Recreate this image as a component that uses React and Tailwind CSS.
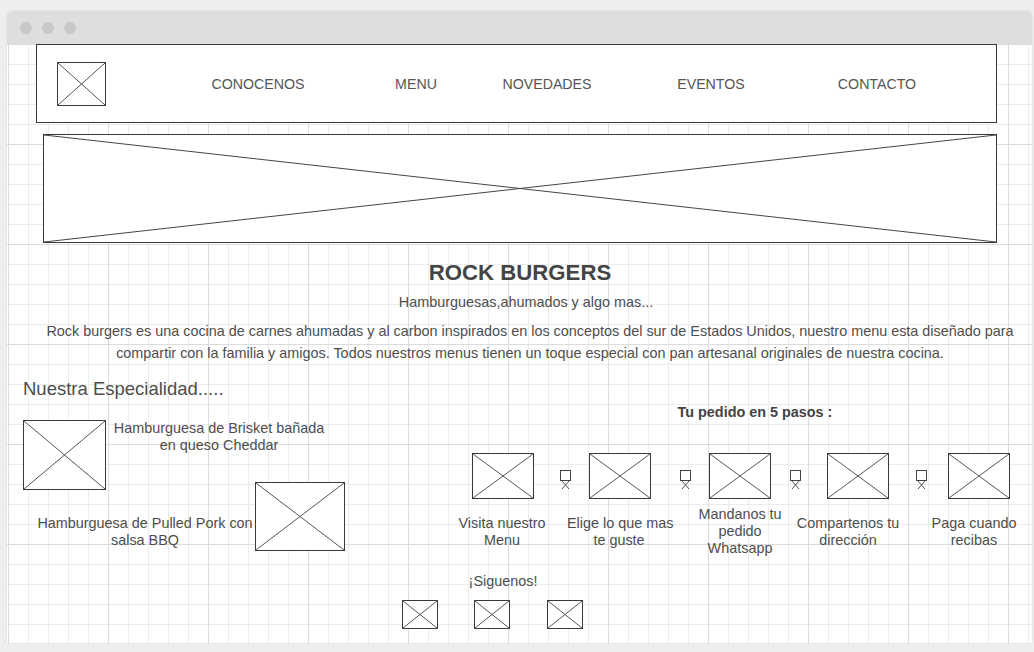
// Wireframe mockup: Rock Burgers landing page
function Ph({ className = "", line = "#555555" }) {
  return (
    <div className={`relative shrink-0 border border-[#3a3a3a] bg-white ${className}`}>
      <svg className="absolute inset-0 h-full w-full" viewBox="0 0 100 100" preserveAspectRatio="none">
        <line x1="0" y1="0" x2="100" y2="100" stroke={line} strokeWidth="1" vectorEffect="non-scaling-stroke" />
        <line x1="100" y1="0" x2="0" y2="100" stroke={line} strokeWidth="1" vectorEffect="non-scaling-stroke" />
      </svg>
    </div>
  );
}

function Connector({ className = "" }) {
  return (
    <svg className={`mt-[17px] shrink-0 ${className}`} width="11" height="20" viewBox="0 0 11 20">
      <rect x="0.5" y="0.5" width="10" height="10" fill="white" stroke="#444" strokeWidth="1" />
      <line x1="2" y1="11" x2="9" y2="19" stroke="#555" strokeWidth="1" />
      <line x1="9" y1="11" x2="2" y2="19" stroke="#555" strokeWidth="1" />
    </svg>
  );
}

const nav = [
  { label: "CONOCENOS", ml: "ml-[92px]" },
  { label: "MENU", ml: "ml-[38px]" },
  { label: "NOVEDADES", ml: "ml-[11px]" },
  { label: "EVENTOS", ml: "ml-[44px]" },
  { label: "CONTACTO", ml: "ml-[46px]" },
];

export default function App() {
  return (
    <div className="h-[652px] w-[1034px] overflow-hidden bg-[#eeeeee] pl-[7px] pt-[11px] font-['Liberation_Sans',Arial,sans-serif] text-[14.4px] text-[#4d4d4d]">
      <div className="w-[1025px] overflow-hidden rounded-t-[6px] shadow-[0_0_2px_rgba(0,0,0,0.12)]">
        {/* title bar */}
        <div className="flex h-[33px] items-center gap-[10px] bg-[#dedede] pl-[13px]">
          <span className="h-[12px] w-[12px] rounded-full bg-[#c8c8c8]" />
          <span className="h-[12px] w-[12px] rounded-full bg-[#c8c8c8]" />
          <span className="h-[12px] w-[12px] rounded-full bg-[#c8c8c8]" />
        </div>

        {/* canvas */}
        <div className="h-[599px] bg-white bg-[linear-gradient(to_right,#dcdcdc_1px,transparent_1px),linear-gradient(to_bottom,#dcdcdc_1px,transparent_1px),linear-gradient(to_right,#ececec_1px,transparent_1px),linear-gradient(to_bottom,#ececec_1px,transparent_1px)] bg-size-[100px_100px,100px_100px,20px_20px,20px_20px] bg-position-[1px_0]">
          {/* nav */}
          <div className="ml-[29px] flex h-[79px] w-[961px] items-center border border-[#3a3a3a] bg-white">
            <Ph className="ml-[20px] h-[44px] w-[49px]" />
            {nav.map((n) => (
              <span key={n.label} className={`${n.ml} mt-[2px] w-[120px] shrink-0 text-center text-[14.2px] text-[#555]`}>
                {n.label}
              </span>
            ))}
          </div>

          {/* banner */}
          <Ph className="ml-[36px] mt-[11px] h-[109px] w-[954px]" line="#444444" />

          <h1 className="ml-[313px] mt-[18px] w-[400px] text-center text-[22.2px] font-bold leading-[24px] text-[#444]">
            ROCK BURGERS
          </h1>
          <p className="ml-[319px] mt-[8px] w-[400px] text-center leading-[18px]">Hamburguesas,ahumados y algo mas...</p>
          <p className="ml-[23px] mt-[9px] w-[1000px] whitespace-nowrap text-center leading-[22px]">
            Rock burgers es una cocina de carnes ahumadas y al carbon inspirados en los conceptos del sur de Estados Unidos, nuestro menu esta diseñado para
            <br />
            compartir con la familia y amigos. Todos nuestros menus tienen un toque especial con pan artesanal originales de nuestra cocina.
          </p>

          {/* lower area */}
          <div className="mt-[14px] flex">
            <div className="w-[433px] shrink-0">
              <h2 className="ml-[16px] text-[18.5px] leading-[22px] text-[#4d4d4d]">Nuestra Especialidad.....</h2>
              <div className="mt-[20px] flex items-start">
                <Ph className="ml-[16px] h-[70px] w-[83px]" />
                <p className="ml-[3px] w-[220px] whitespace-nowrap text-center leading-[17px]">
                  Hamburguesa de Brisket bañada
                  <br />
                  en queso Cheddar
                </p>
              </div>
              <div className="mt-[-8px] flex items-start">
                <p className="ml-[28px] mt-[33px] w-[220px] whitespace-nowrap text-center leading-[17px]">
                  Hamburguesa de Pulled Pork con
                  <br />
                  salsa BBQ
                </p>
                <Ph className="h-[69px] w-[90px]" />
              </div>
            </div>

            <div className="flex-1">
              <p className="ml-[165px] mt-[26px] w-[300px] text-center font-bold leading-[17px] text-[#444]">
                Tu pedido en 5 pasos :
              </p>
              <div className="mt-[32px] flex items-start">
                <Ph className="ml-[32px] h-[46px] w-[62px]" />
                <Connector className="ml-[26px]" />
                <Ph className="ml-[18px] h-[46px] w-[62px]" />
                <Connector className="ml-[29px]" />
                <Ph className="ml-[18px] h-[46px] w-[62px]" />
                <Connector className="ml-[19px]" />
                <Ph className="ml-[26px] h-[46px] w-[62px]" />
                <Connector className="ml-[27px]" />
                <Ph className="ml-[21px] h-[46px] w-[62px]" />
              </div>
              <div className="mt-[7px] flex h-[51px] items-center whitespace-nowrap text-center leading-[17px]">
                <p className="ml-[10px] w-[104px] shrink-0">
                  Visita nuestro
                  <br />
                  Menu
                </p>
                <p className="ml-[13px] w-[104px] shrink-0">
                  Elige lo que mas
                  <br />
                  te guste
                </p>
                <p className="ml-[17px] w-[104px] shrink-0">
                  Mandanos tu
                  <br />
                  pedido
                  <br />
                  Whatsapp
                </p>
                <p className="ml-[4px] w-[104px] shrink-0">
                  Compartenos tu
                  <br />
                  dirección
                </p>
                <p className="ml-[22px] w-[104px] shrink-0">
                  Paga cuando
                  <br />
                  recibas
                </p>
              </div>
            </div>
          </div>

          {/* social */}
          <p className="ml-[396px] mt-[16px] w-[200px] text-center leading-[17px]">¡Siguenos!</p>
          <div className="ml-[395px] mt-[10px] flex">
            <Ph className="h-[29px] w-[36px]" />
            <Ph className="ml-[36px] h-[29px] w-[36px]" />
            <Ph className="ml-[37px] h-[29px] w-[36px]" />
          </div>
        </div>
      </div>
    </div>
  );
}
